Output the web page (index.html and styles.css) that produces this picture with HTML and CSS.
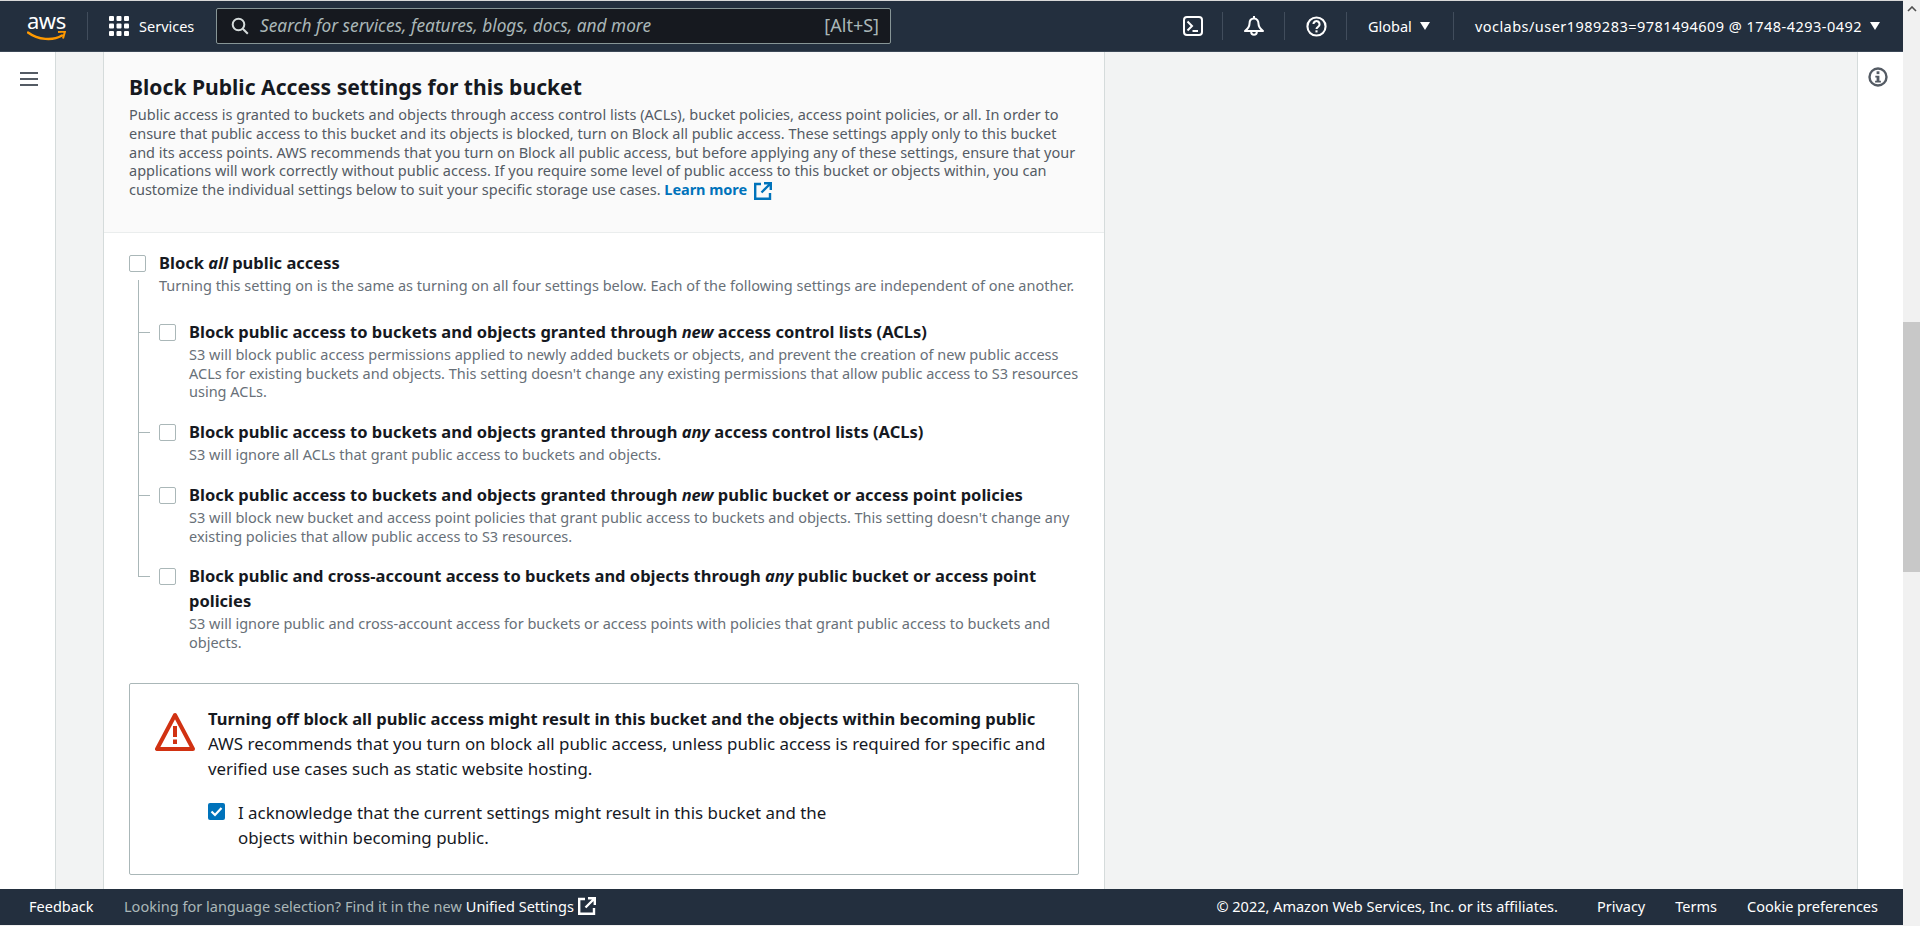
FILE: index.html
```html
<!DOCTYPE html>
<html lang="en">
<head>
<meta charset="utf-8">
<title>S3 Block Public Access</title>
<link rel="stylesheet" href="styles.css">
</head>
<body>
<div class="window">
  <div class="app">
    <header class="topbar">
      <div class="logo">
        <span class="logo-text">aws</span>
        <svg class="logo-smile" viewBox="0 0 40 12" width="40" height="12"><path d="M1 1.500c10 7.500 25 8.500 34 3" fill="none" stroke="#f90" stroke-width="2.400" stroke-linecap="round"/><path d="M31 1l7-.5-2 7" fill="none" stroke="#f90" stroke-width="2" stroke-linejoin="round"/></svg>
      </div>
      <span class="sep sep-logo"></span>
      <svg class="grid-icon" viewBox="0 0 20 20" width="20" height="20"><g fill="#fff"><rect x="0" y="0" width="5" height="5" rx="1"/><rect x="7.5" y="0" width="5" height="5" rx="1"/><rect x="15" y="0" width="5" height="5" rx="1"/><rect x="0" y="7.5" width="5" height="5" rx="1"/><rect x="7.5" y="7.5" width="5" height="5" rx="1"/><rect x="15" y="7.5" width="5" height="5" rx="1"/><rect x="0" y="15" width="5" height="5" rx="1"/><rect x="7.5" y="15" width="5" height="5" rx="1"/><rect x="15" y="15" width="5" height="5" rx="1"/></g></svg>
      <span class="services">Services</span>
      <div class="search">
        <svg class="search-icon" viewBox="0 0 18 18" width="18" height="18"><circle cx="7.5" cy="7.5" r="5.8" fill="none" stroke="#d5dbdb" stroke-width="2"/><path d="M11.8 11.8l5 5" stroke="#d5dbdb" stroke-width="2" fill="none"/></svg>
        <span class="search-text">Search for services, features, blogs, docs, and more</span>
        <span class="search-key">[Alt+S]</span>
      </div>
      <div class="top-right">
        <svg class="top-icon" viewBox="0 0 20 20" width="20" height="20"><rect x="1" y="1" width="18" height="18" rx="3" fill="none" stroke="#fff" stroke-width="2"/><path d="M4.500 5.500l4.500 4.500-4.500 4.500" fill="none" stroke="#fff" stroke-width="2"/><path d="M9.500 15h5.500" stroke="#fff" stroke-width="2"/></svg>
        <span class="sep sep-first"></span>
        <svg class="top-icon" viewBox="0 0 20 20" width="20" height="20"><path d="M10 0v3" stroke="#fff" stroke-width="2"/><path d="M10 2.500c-3 0-4.500 2.300-4.500 5.200 0 3-1.600 4.900-4.500 7.300h18c-2.900-2.400-4.500-4.300-4.500-7.300 0-2.900-1.500-5.200-4.500-5.200z" fill="none" stroke="#fff" stroke-width="2" stroke-linejoin="round"/><path d="M7.200 16a2.800 2.800 0 0 0 5.600 0" fill="none" stroke="#fff" stroke-width="2"/></svg>
        <span class="sep"></span>
        <svg class="top-icon help-icon" viewBox="0 0 22 22" width="21" height="21"><circle cx="11" cy="11" r="9.500" fill="none" stroke="#fff" stroke-width="2.200"/><path d="M7.800 8.500a3.200 3.200 0 1 1 4.800 2.800c-1 .6-1.600 1.200-1.600 2.400" fill="none" stroke="#fff" stroke-width="2.200"/><rect x="9.900" y="15" width="2.200" height="2.200" fill="#fff"/></svg>
        <span class="sep sep-wide"></span>
        <span class="menu-label">Global</span>
        <svg class="caret" viewBox="0 0 10 8" width="10" height="8"><path d="M0 0h10L5 8z" fill="#fff"/></svg>
        <span class="sep sep-menu"></span>
        <span class="menu-label menu-account">voclabs/user1989283=9781494609 @ 1748-4293-0492</span>
        <svg class="caret" viewBox="0 0 10 8" width="10" height="8"><path d="M0 0h10L5 8z" fill="#fff"/></svg>
      </div>
    </header>

    <div class="middle">
      <aside class="rail">
        <svg viewBox="0 0 18 16" width="18" height="16"><path d="M0 2h18M0 8h18M0 14h18" stroke="#545b64" stroke-width="2.200"/></svg>
      </aside>
      <main class="content">
        <section class="card">
          <div class="card-head">
            <h2 class="card-title">Block Public Access settings for this bucket</h2>
            <p class="card-desc">Public access is granted to buckets and objects through access control lists (ACLs), bucket policies, access point policies, or all. In order to ensure that public access to this bucket and its objects is blocked, turn on Block all public access. These settings apply only to this bucket and its access points. AWS recommends that you turn on Block all public access, but before applying any of these settings, ensure that your applications will work correctly without public access. If you require some level of public access to this bucket or objects within, you can customize the individual settings below to suit your specific storage use cases. <a class="learn">Learn more</a> <svg class="ext-blue" viewBox="0 0 18 18" width="18" height="18"><path d="M7 2H1.200v14.800H16V11" fill="none" stroke="#0073bb" stroke-width="2.400"/><path d="M7.500 10.500L16 2M10 1.200h6.800V8" fill="none" stroke="#0073bb" stroke-width="2.400"/></svg></p>
          </div>
          <div class="card-body">
            <div class="option">
              <span class="box"></span>
              <div class="option-text">
                <div class="opt-title">Block <em>all</em> public access</div>
                <div class="opt-desc">Turning this setting on is the same as turning on all four settings below. Each of the following settings are independent of one another.</div>
              </div>
            </div>
            <div class="tree">
              <div class="option sub">
                <span class="box"></span>
                <div class="option-text">
                  <div class="opt-title">Block public access to buckets and objects granted through <em>new</em> access control lists (ACLs)</div>
                  <div class="opt-desc">S3 will block public access permissions applied to newly added buckets or objects, and prevent the creation of new public access ACLs for existing buckets and objects. This setting doesn't change any existing permissions that allow public access to S3 resources using ACLs.</div>
                </div>
              </div>
              <div class="option sub">
                <span class="box"></span>
                <div class="option-text">
                  <div class="opt-title">Block public access to buckets and objects granted through <em>any</em> access control lists (ACLs)</div>
                  <div class="opt-desc">S3 will ignore all ACLs that grant public access to buckets and objects.</div>
                </div>
              </div>
              <div class="option sub">
                <span class="box"></span>
                <div class="option-text">
                  <div class="opt-title">Block public access to buckets and objects granted through <em>new</em> public bucket or access point policies</div>
                  <div class="opt-desc">S3 will block new bucket and access point policies that grant public access to buckets and objects. This setting doesn't change any existing policies that allow public access to S3 resources.</div>
                </div>
              </div>
              <div class="option sub">
                <span class="box"></span>
                <div class="option-text">
                  <div class="opt-title">Block public and cross-account access to buckets and objects through <em>any</em> public bucket or access point policies</div>
                  <div class="opt-desc">S3 will ignore public and cross-account access for buckets or access points with policies that grant public access to buckets and objects.</div>
                </div>
              </div>
            </div>
            <div class="warning">
              <svg class="warn-icon" viewBox="0 0 40 40" width="40" height="40"><path d="M20 3L2 37h36z" fill="none" stroke="#d13212" stroke-width="4" stroke-linejoin="round"/><rect x="18" y="14" width="4" height="11" fill="#d13212"/><rect x="18" y="27.500" width="4" height="4.500" fill="#d13212"/></svg>
              <div class="warn-body">
                <div class="warn-title">Turning off block all public access might result in this bucket and the objects within becoming public</div>
                <div class="warn-text">AWS recommends that you turn on block all public access, unless public access is required for specific and verified use cases such as static website hosting.</div>
                <div class="ack">
                  <span class="box checked"><svg viewBox="0 0 17 17" width="17" height="17"><path d="M3.500 8.500l3.500 3.500 6.500-7" fill="none" stroke="#fff" stroke-width="2.200"/></svg></span>
                  <span class="ack-text">I acknowledge that the current settings might result in this bucket and the objects within becoming public.</span>
                </div>
              </div>
            </div>
          </div>
        </section>
      </main>
      <aside class="info-rail">
        <svg viewBox="0 0 20 20" width="20" height="20"><circle cx="10" cy="10" r="8.500" fill="none" stroke="#545b64" stroke-width="2.400"/><rect x="8.600" y="4.300" width="2.800" height="2.800" fill="#545b64"/><path d="M7.300 8.700h4.100v5.100h1.500v1.700H7.100v-1.700h1.500v-3.400H7.300z" fill="#545b64"/></svg>
      </aside>
    </div>

    <footer class="footbar">
      <span class="foot-link foot-feedback">Feedback</span>
      <span class="foot-muted">Looking for language selection? Find it in the new</span>
      <span class="foot-link foot-unified">Unified Settings</span>
      <svg class="ext-white" viewBox="0 0 18 18" width="18" height="18"><path d="M7 2H1.200v14.800H16V11" fill="none" stroke="#fff" stroke-width="2.400"/><path d="M7.500 10.500L16 2M10 1.200h6.800V8" fill="none" stroke="#fff" stroke-width="2.400"/></svg>
      <div class="foot-right">
        <span class="foot-link foot-copy">© 2022, Amazon Web Services, Inc. or its affiliates.</span>
        <span class="foot-link">Privacy</span>
        <span class="foot-link">Terms</span>
        <span class="foot-link">Cookie preferences</span>
      </div>
    </footer>
  </div>
  <div class="scrollbar">
    <svg class="scroll-up" viewBox="0 0 10 6" width="10" height="6"><path d="M1 5l4-4 4 4" fill="none" stroke="#505050" stroke-width="1.600"/></svg>
    <div class="scroll-thumb"></div>
  </div>
</div>
</body>
</html>
```
FILE: styles.css
```css
* { box-sizing: border-box; }
html, body { margin: 0; padding: 0; height: 100%; overflow: hidden; }
body { font-family: "Noto Sans", "Open Sans", sans-serif; color: #16191f; background: #fff; }

.window { display: flex; height: 926px; }
.app { flex: 1; min-width: 0; display: flex; flex-direction: column; }

.topbar { height: 52px; flex: none; display: flex; align-items: center; background: #232f3e; border-top: 1px solid #d9d9d9; border-bottom: 1px solid #3c4857; color: #fff; font-size: 14.500px; padding-left: 27px; }
.logo { width: 38px; height: 34px; display: flex; flex-direction: column; align-items: flex-start; }
.logo-text { font-size: 22px; line-height: 22px; height: 22px; letter-spacing: -0.5px; }
.logo-smile { margin-top: 0; flex: none; }
.sep { width: 1px; height: 28px; background: #414d5c; flex: none; }
.sep-logo { margin: 0 21px 0 22px; }
.grid-icon { flex: none; }
.services { margin-left: 10px; width: 56px; white-space: nowrap; }
.search { margin-left: 21px; width: 675px; height: 36px; flex: none; background: #16191f; border: 1px solid #879596; border-radius: 2px; display: flex; align-items: center; padding: 0 11px 2px 14px; font-size: 17.300px; }
.search-icon { flex: none; margin-top: 2px; }
.search-text { margin-left: 11px; font-style: italic; color: #aab7b8; flex: 1; white-space: nowrap; }
.search-key { color: #aab7b8; font-size: 18px; }
.top-right { margin-left: auto; display: flex; align-items: center; padding-right: 23px; }
.top-right .sep { margin: 0 21px 0 20px; }
.top-right .sep-first { margin: 0 21px 0 19px; }
.top-right .sep-wide { margin: 0 21px 0 19px; }
.top-right .sep-menu { margin: 0 21px 0 23px; }
.top-icon { flex: none; }
.menu-label { white-space: nowrap; }
.menu-account { letter-spacing: 0.470px; }
.caret { margin-left: 8px; flex: none; }

.middle { flex: 1; min-height: 0; display: flex; background: #f2f3f3; }
.rail { width: 56px; flex: none; background: #fff; border-right: 1px solid #d5dbdb; padding: 18px 0 0 20px; }
.content { flex: 1; min-width: 0; overflow: hidden; padding-left: 47px; }
.info-rail { width: 46px; flex: none; background: #fff; border-left: 1px solid #d5dbdb; padding: 15px 0 0 10px; }

.card { width: 1002px; background: #fff; border-left: 1px solid #d5dbdb; border-right: 1px solid #d5dbdb; min-height: 1000px; }
.card-head { height: 181px; background: #fafafa; border-bottom: 1px solid #eaeded; padding: 21px 20px 0 25px; }
.card-title { margin: 0; font-size: 21.100px; line-height: 28px; font-weight: 700; color: #16191f; }
.card-desc { margin: 4px 0 0; font-size: 14.500px; line-height: 18.750px; color: #545b64; }
.learn { color: #0073bb; font-weight: 700; letter-spacing: -0.05px; }
.ext-blue { vertical-align: -5px; margin-left: 3px; }

.card-body { padding: 18px 25px 0; }
.option { display: flex; align-items: flex-start; }
.box { width: 17px; height: 17px; flex: none; background: #fff; border: 1px solid #aab7b8; border-radius: 2px; margin-top: 4px; }
.box.checked { background: #0073bb; border: 0; }
.box svg { display: block; }
.option-text { margin-left: 13px; flex: 1; min-width: 0; }
.opt-title { font-size: 16.500px; line-height: 25px; font-weight: 700; color: #16191f; margin: -1px 0 1px; }
.opt-desc { font-size: 14.500px; line-height: 18.750px; color: #687078; }

.tree { position: relative; margin-top: 25px; padding-left: 30px; display: flex; flex-direction: column; gap: 19px; }
.tree::before { content: ""; position: absolute; left: 9px; top: -40px; bottom: 75px; width: 1px; background: #aab7b8; }
.sub { position: relative; }
.sub::before { content: ""; position: absolute; left: -21px; top: 12px; width: 12px; height: 1px; background: #aab7b8; }

.warning { margin-top: 31px; height: 192px; display: flex; border: 1px solid #aab7b8; border-radius: 2px; padding: 22px 25px 0 25px; background: #fff; }
.warn-icon { flex: none; margin-top: 6px; }
.warn-body { margin-left: 13px; flex: 1; min-width: 0; font-size: 16.900px; line-height: 25px; color: #16191f; }
.warn-title { font-weight: 700; font-size: 16.550px; }
.ack { display: flex; align-items: flex-start; margin-top: 19px; }
.ack .box { margin-top: 3px; }
.ack-text { margin-left: 13px; width: 620px; }

.footbar { height: 37px; flex: none; display: flex; align-items: center; background: #232f3e; font-size: 14.500px; padding: 0 25px 2px 29px; border-bottom: 1px solid #f0f0f0; white-space: nowrap; }
.foot-link { color: #fff; }
.foot-feedback { width: 95px; }
.foot-muted { color: #aab7b8; letter-spacing: 0.020px; }
.foot-unified { margin-left: 4px; }
.ext-white { margin-left: 4px; flex: none; }
.foot-right { margin-left: auto; display: flex; gap: 30px; }
.foot-copy { margin-right: 9px; }

.scrollbar { width: 17px; flex: none; background: #f1f1f1; position: relative; }
.scroll-up { position: absolute; left: 4px; top: 6px; }
.scroll-thumb { position: absolute; left: 0; top: 322px; width: 17px; height: 250px; background: #c8c8c8; }
```
